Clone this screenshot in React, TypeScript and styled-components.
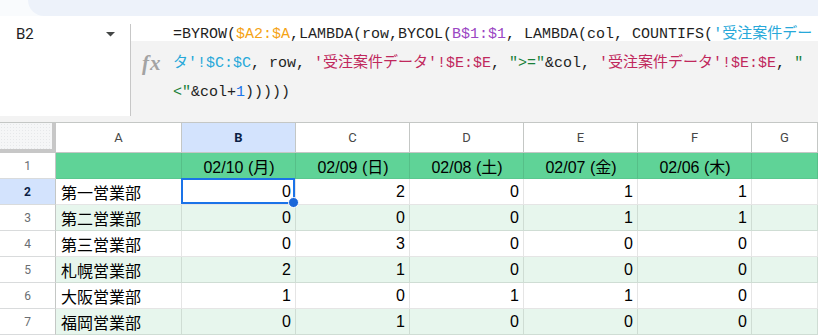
import React from "react";
import styled, { createGlobalStyle } from "styled-components";

const GlobalStyle = createGlobalStyle`
  html, body { margin: 0; padding: 0; background: #f9fbfd; }
  body { width: 818px; height: 335px; overflow: hidden; font-family: "Liberation Sans", "Noto Sans CJK JP", sans-serif; }
  * { box-sizing: border-box; }
`;

const Page = styled.div`
  width: 818px;
  height: 335px;
  overflow: hidden;
  display: flex;
  flex-direction: column;
  background: #f9fbfd;
`;

const TopStrip = styled.div`
  height: 16px;
  flex-shrink: 0;
  display: flex;
  padding-left: 28px;
`;

const ToolbarTail = styled.div`
  flex: 1;
  background: #edf2fa;
  border-bottom-left-radius: 16px;
`;

const FormulaBar = styled.div`
  height: 100px;
  flex-shrink: 0;
  display: flex;
  background: #ffffff;
`;

const NameBox = styled.div`
  width: 130px;
  display: flex;
  align-items: flex-start;
  justify-content: space-between;
  padding: 8px 15px 0 16px;
`;

const NameText = styled.span`
  font-family: Roboto, "Liberation Sans", sans-serif;
  font-size: 15px;
  line-height: 20px;
  color: #1f1f1f;
`;

const Caret = styled.svg`
  margin-top: 8px;
  flex-shrink: 0;
`;

const Divider = styled.div`
  width: 1px;
  margin-top: 8px;
  background: #c7c7c7;
`;

const FormulaArea = styled.div`
  flex: 1;
  display: flex;
  background: linear-gradient(#ffffff 0 25px, #f3f3f3 25px);
`;

const FxSlot = styled.div`
  width: 42px;
  flex-shrink: 0;
  padding: 33px 0 0 11px;
`;

const FxGlyph = styled.span`
  display: block;
  font-family: "Liberation Serif", serif;
  font-style: italic;
  font-weight: 700;
  font-size: 21px;
  line-height: 29px;
  letter-spacing: 1px;
  color: #a3a3a3;
`;

const FormulaText = styled.div`
  flex: 1;
  padding-top: 4px;
  font-family: "Liberation Mono", "Noto Sans CJK JP", monospace;
  font-size: 15px;
  line-height: 29px;
  color: #1f1f1f;
  white-space: pre;
  overflow: hidden;
`;

const FormulaLine = styled.div`
  height: 29px;
`;

type Tone = "def" | "orange" | "purple" | "cyan" | "crimson" | "green" | "blue";

const toneColor: Record<Tone, string> = {
  def: "#1f1f1f",
  orange: "#f5a314",
  purple: "#9b46c3",
  cyan: "#27a8d9",
  crimson: "#c0285c",
  green: "#188038",
  blue: "#1a73e8",
};

const Token = styled.span<{ $tone: Tone }>`
  color: ${(p) => toneColor[p.$tone]};
`;

const GapStrip = styled.div`
  height: 6px;
  flex-shrink: 0;
  background: #f3f3f3;
`;

const Grid = styled.div`
  display: grid;
  grid-template-columns: 56px 126px repeat(5, 114px) 1fr;
  grid-template-rows: 30px repeat(7, 26px);
  border-top: 1px solid #c4c7c5;
  background: #ffffff;
`;

const Corner = styled.div`
  background-color: #f5f6f7;
  background-image: radial-gradient(#e6e8ea 0.6px, transparent 0.8px);
  background-size: 3px 3px;
  border-right: 4px solid #c7c7c7;
  border-bottom: 4px solid #c7c7c7;
`;

const ColHeader = styled.div<{ $active?: boolean }>`
  display: flex;
  align-items: center;
  justify-content: center;
  border-right: 1px solid #c4c7c5;
  border-bottom: 1px solid #c4c7c5;
  background: ${(p) => (p.$active ? "#d3e3fd" : "#ffffff")};
  font-family: Roboto, "Liberation Sans", sans-serif;
  font-size: 13px;
  font-weight: ${(p) => (p.$active ? 700 : 400)};
  color: ${(p) => (p.$active ? "#0b1f45" : "#474747")};
`;

const RowHeader = styled.div<{ $active?: boolean }>`
  display: flex;
  align-items: center;
  justify-content: center;
  border-right: 1px solid #c4c7c5;
  border-bottom: 1px solid #d9dbdc;
  background: ${(p) => (p.$active ? "#d3e3fd" : "#ffffff")};
  font-family: Roboto, "Liberation Sans", sans-serif;
  font-size: 12px;
  font-weight: ${(p) => (p.$active ? 700 : 400)};
  color: ${(p) => (p.$active ? "#0b1f45" : "#6a6e72")};
`;

type Band = "head" | "alt" | "plain";
const bandColor: Record<Band, string> = {
  head: "#5fd397",
  alt: "#e7f6ed",
  plain: "#ffffff",
};

const Cell = styled.div<{ $band: Band; $align: "left" | "right" | "center"; $selected?: boolean }>`
  position: relative;
  z-index: ${(p) => (p.$selected ? 2 : "auto")};
  display: flex;
  align-items: center;
  justify-content: ${(p) =>
    p.$align === "left" ? "flex-start" : p.$align === "right" ? "flex-end" : "center"};
  padding: 0 4px 0 5px;
  background: ${(p) => bandColor[p.$band]};
  border-right: 1px solid ${(p) => (p.$band === "head" ? "rgba(0,0,0,0.09)" : "rgba(0,0,0,0.1)")};
  border-bottom: 1px solid ${(p) => (p.$band === "head" ? "rgba(0,0,0,0.05)" : "rgba(0,0,0,0.1)")};
  font-family: "Liberation Sans", "Noto Sans CJK JP", sans-serif;
  font-size: 16px;
  color: #000000;
  white-space: nowrap;
`;

const Selection = styled.div`
  position: absolute;
  top: -1px;
  left: -1px;
  right: 0;
  bottom: 0;
  border: 2px solid #1a73e8;
  pointer-events: none;
`;

const Handle = styled.div`
  position: absolute;
  right: -6px;
  bottom: -6px;
  width: 11px;
  height: 11px;
  border-radius: 50%;
  background: #1a67d9;
  border: 1px solid #ffffff;
`;

const formula: [string, Tone][][] = [
  [
    ["=BYROW(", "def"],
    ["$A2:$A", "orange"],
    [",LAMBDA(row,BYCOL(", "def"],
    ["B$1:$1", "purple"],
    [", LAMBDA(col, COUNTIFS(", "def"],
    ["'受注案件デー", "cyan"],
  ],
  [
    ["タ'!$C:$C", "cyan"],
    [", row, ", "def"],
    ["'受注案件データ'!$E:$E", "crimson"],
    [", ", "def"],
    ['">="', "green"],
    ["&col, ", "def"],
    ["'受注案件データ'!$E:$E", "crimson"],
    [", ", "def"],
    ['"', "green"],
  ],
  [
    ['<"', "green"],
    ["&col+", "def"],
    ["1", "blue"],
    [")))))", "def"],
  ],
];

const columns = ["A", "B", "C", "D", "E", "F", "G"];
const dates = ["02/10 (月)", "02/09 (日)", "02/08 (土)", "02/07 (金)", "02/06 (木)"];
const rows: [string, number[]][] = [
  ["第一営業部", [0, 2, 0, 1, 1]],
  ["第二営業部", [0, 0, 0, 1, 1]],
  ["第三営業部", [0, 3, 0, 0, 0]],
  ["札幌営業部", [2, 1, 0, 0, 0]],
  ["大阪営業部", [1, 0, 1, 1, 0]],
  ["福岡営業部", [0, 1, 0, 0, 0]],
];

export default function App() {
  return (
    <>
      <GlobalStyle />
      <Page>
        <TopStrip>
          <ToolbarTail />
        </TopStrip>
        <FormulaBar>
          <NameBox>
            <NameText>B2</NameText>
            <Caret width="9" height="5" viewBox="0 0 9 5">
              <path d="M0 0 L9 0 L4.5 4.5 Z" fill="#444746" />
            </Caret>
          </NameBox>
          <Divider />
          <FormulaArea>
            <FxSlot>
              <FxGlyph>fx</FxGlyph>
            </FxSlot>
            <FormulaText>
              {formula.map((line, i) => (
                <FormulaLine key={i}>
                  {line.map(([t, tone], j) => (
                    <Token key={j} $tone={tone}>
                      {t}
                    </Token>
                  ))}
                </FormulaLine>
              ))}
            </FormulaText>
          </FormulaArea>
        </FormulaBar>
        <GapStrip />
        <Grid>
          <Corner />
          {columns.map((c) => (
            <ColHeader key={c} $active={c === "B"}>
              {c}
            </ColHeader>
          ))}
          <RowHeader>1</RowHeader>
          <Cell $band="head" $align="center" />
          {dates.map((d) => (
            <Cell key={d} $band="head" $align="center">
              {d}
            </Cell>
          ))}
          <Cell $band="head" $align="center" />
          {rows.map(([name, vals], i) => {
            const band: Band = i % 2 === 1 ? "alt" : "plain";
            return (
              <React.Fragment key={name}>
                <RowHeader $active={i === 0}>{i + 2}</RowHeader>
                <Cell $band={band} $align="left">
                  {name}
                </Cell>
                {vals.map((v, j) => {
                  const selected = i === 0 && j === 0;
                  return (
                    <Cell key={j} $band={band} $align="right" $selected={selected}>
                      {v}
                      {selected && (
                        <Selection>
                          <Handle />
                        </Selection>
                      )}
                    </Cell>
                  );
                })}
                <Cell $band={band} $align="right" />
              </React.Fragment>
            );
          })}
        </Grid>
      </Page>
    </>
  );
}
